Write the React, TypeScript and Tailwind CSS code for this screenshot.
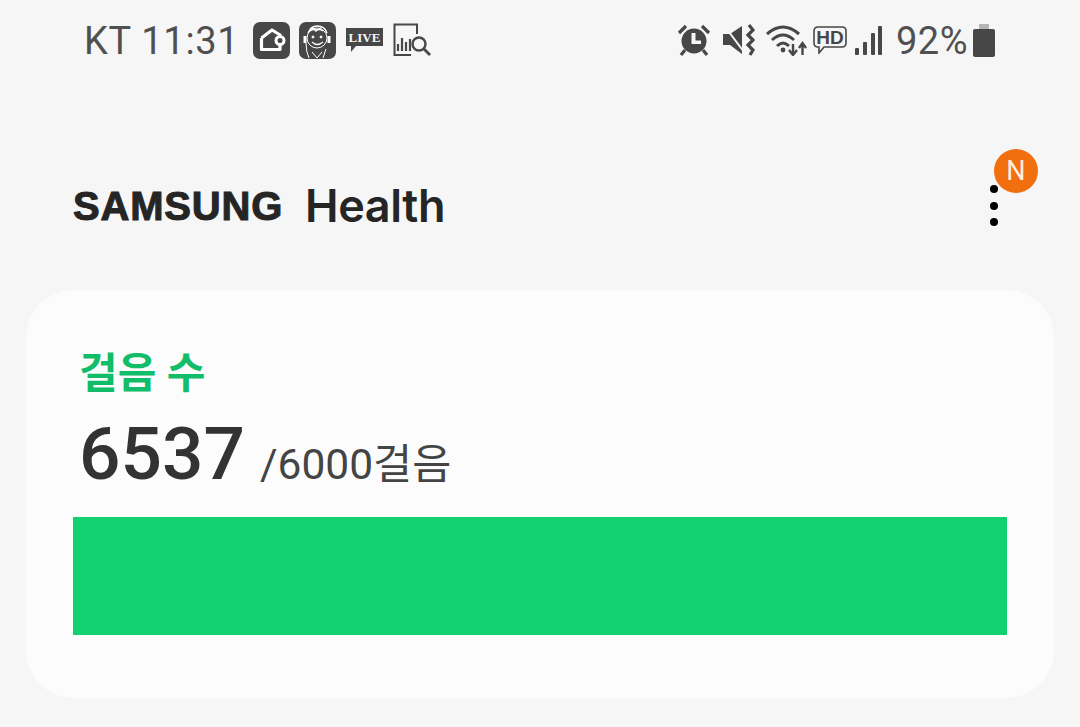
/**
 * Samsung Health steps card
 */

const AppBadge = ({ children }: { children: React.ReactNode }) => (
  <div className="w-[37px] h-[37px] rounded-[7px] bg-[#474747] flex items-center justify-center overflow-hidden">
    {children}
  </div>
);

const StatusLeft = () => (
  <div className="flex items-center">
    <span className="mt-[2px] text-[38px] leading-none text-[#505050] tracking-[0.7px] w-[169px] whitespace-nowrap">KT 11:31</span>
    <AppBadge>
      <svg width="37" height="37" viewBox="0 0 37 37" fill="none">
        <path d="M8.5 16 L19 8 L28 13.5 M8.5 16 V27.5 H27 V22" stroke="#fff" strokeWidth="3.2" strokeLinejoin="round" />
        <circle cx="27" cy="18.5" r="4" fill="#474747" stroke="#fff" strokeWidth="3" />
      </svg>
    </AppBadge>
    <div className="ml-[9px]">
      <AppBadge>
        <svg width="37" height="37" viewBox="0 0 37 37" fill="none" stroke="#fff" strokeWidth="1">
          <circle cx="18" cy="16" r="10" />
          <path d="M9 11 Q12 4 18 4 Q26 4 28 11 M11 9 Q15 6 17 9 Q20 6 24 9 M13 6 Q17 10 22 6" strokeWidth="1.4" />
          <path d="M6 14 V21 M30 14 V21" strokeWidth="3" />
          <path d="M13 20 Q18 25 24 20" strokeWidth="1.2" />
          <path d="M7 21 Q7 30 10 36 M27 27 L24 36 M13 30 L18 36 L23 30" />
          <circle cx="14" cy="15" r="1" fill="#fff" />
          <circle cx="22" cy="15" r="1" fill="#fff" />
        </svg>
      </AppBadge>
    </div>
    <svg className="ml-[10px]" width="37" height="26" viewBox="0 0 37 26">
      <path d="M0 1 H37 V19 H10 L5 25 V19 H0 Z" fill="#474747" />
      <text x="18.5" y="15" textAnchor="middle" fontSize="13" fontWeight="700" fill="#f6f6f6" fontFamily="'Liberation Serif', serif">LIVE</text>
    </svg>
    <svg className="ml-[10px]" width="38" height="34" viewBox="0 0 38 34" fill="none" stroke="#474747">
      <path d="M18 32 H1.5 V1.5 H24 V11" strokeWidth="2" />
      <path d="M5 28 V21 M9 28 V15 M13 28 V19 M17 28 V16" strokeWidth="2.2" />
      <circle cx="26" cy="21" r="6.5" strokeWidth="2.4" />
      <path d="M31 26 L37 32" strokeWidth="2.8" />
    </svg>
  </div>
);

const StatusRight = () => (
  <div className="flex items-center">
    <svg width="34" height="32" viewBox="0 0 34 32">
      <circle cx="17" cy="17" r="12.5" fill="#474747" />
      <path d="M14.5 9 V20 H24 V16.5 H18.5 V9 Z" fill="#f6f6f6" />
      <path d="M2 9 L9 2 M32 9 L25 2 M4 31 L8 26 M30 31 L26 26" stroke="#474747" strokeWidth="3.2" />
    </svg>
    <svg className="ml-[11px]" width="33" height="32" viewBox="0 0 33 32" fill="none">
      <path d="M1 10 H8 L20 2 V30 L8 21 H1 Z" fill="#474747" />
      <path d="M1 0 L22 28" stroke="#f6f6f6" strokeWidth="2" />
      <path d="M27 1 L31 6 L26 11 L31 16 L26 21 L31 26 L28 31" stroke="#474747" strokeWidth="3.2" />
    </svg>
    <svg className="ml-[11px]" width="41" height="32" viewBox="0 0 41 32" fill="none" stroke="#474747" strokeWidth="3">
      <path d="M1 10 Q17 -4 33 10" />
      <path d="M6 16 Q17 6 28 16" />
      <path d="M11 22 Q17 16 23 22" />
      <circle cx="17" cy="26" r="2.4" fill="#474747" stroke="none" />
      <path d="M27 20 V30 M23 26 L27 31 L31 26" strokeWidth="2.4" />
      <path d="M36.5 31 V20 M33 24 L36.5 19 L40 24" strokeWidth="2.4" />
    </svg>
    <svg className="ml-[6px]" width="34" height="28" viewBox="0 0 34 28" fill="none">
      <path d="M5 1 H29 Q33 1 33 5 V17 Q33 21 29 21 H11 L6 27 V21 H5 Q1 21 1 17 V5 Q1 1 5 1 Z" stroke="#474747" strokeWidth="1.6" />
      <text x="17" y="17.5" textAnchor="middle" fontSize="19" fontWeight="700" fill="#474747" fontFamily="'Liberation Sans', sans-serif">HD</text>
    </svg>
    <svg className="ml-[7px]" width="29" height="30" viewBox="0 0 29 30" fill="#474747">
      <rect x="1" y="23" width="4" height="7" rx="1" />
      <rect x="9" y="17" width="4" height="13" rx="1" />
      <rect x="17" y="8" width="4" height="22" rx="1" />
      <rect x="24" y="1" width="4" height="29" rx="1" />
    </svg>
    <span className="ml-[13px] mt-[2px] text-[38px] leading-none tracking-[0.5px] text-[#505050] whitespace-nowrap">92%</span>
    <svg className="ml-[5px]" width="22" height="33" viewBox="0 0 22 33">
      <rect x="6" y="0" width="10" height="5" fill="#b5b5b5" />
      <rect x="0" y="5" width="22" height="28" rx="2" fill="#474747" />
    </svg>
  </div>
);

export default function App() {
  return (
    <div className="w-[1080px] h-[727px] overflow-hidden bg-[#f6f6f6] font-['Roboto','Noto_Sans_CJK_KR',sans-serif]">
      <div className="h-[80px] pl-[84px] pr-[85px] flex items-center justify-between">
        <StatusLeft />
        <StatusRight />
      </div>

      {/* Header */}
      <div className="h-[210px] pl-[73px] pr-[42px] flex items-center justify-between">
        <div className="flex items-center text-[#252525] mt-[41px]">
          <span className="font-['Liberation_Sans',sans-serif] text-[40px] leading-none font-bold tracking-[0.8px] [-webkit-text-stroke:1px_#252525]">SAMSUNG</span>
          <span className="ml-[22px] font-['Inter',sans-serif] text-[45px] leading-none font-semibold tracking-[-0.4px]">Health</span>
        </div>
        <div className="relative w-[44px] h-[80px] mt-[8px]">
          <div className="absolute left-[-4px] top-[36px] w-[8px] flex flex-col gap-[8.5px]">
            <span className="w-[8px] h-[8px] rounded-full bg-black" />
            <span className="w-[8px] h-[8px] rounded-full bg-black" />
            <span className="w-[8px] h-[8px] rounded-full bg-black" />
          </div>
          <div className="absolute left-0 top-0 w-[44px] h-[44px] rounded-full bg-[#f26f10] text-[#fdeedd] text-[27px] flex items-center justify-center">
            N
          </div>
        </div>
      </div>

      {/* Steps card */}
      <div className="mx-[26px] h-[408px] rounded-[48px] bg-[#fcfcfc] px-[47px] pt-[56px]">
        <div className="pl-[6px] text-[42px] leading-[56px] font-bold text-[#12bd6a]">걸음 수</div>
        <div className="pl-[6px] mt-[12px] h-[80px] flex items-baseline text-[#333333]">
          <span className="text-[73px] leading-[80px] font-medium">6537</span>
          <span className="ml-[15px] text-[42.5px] text-[#444444]">/6000걸음</span>
        </div>
        <div className="mt-[23px] h-[118px] bg-[#12d16f]" />
      </div>
    </div>
  );
}
